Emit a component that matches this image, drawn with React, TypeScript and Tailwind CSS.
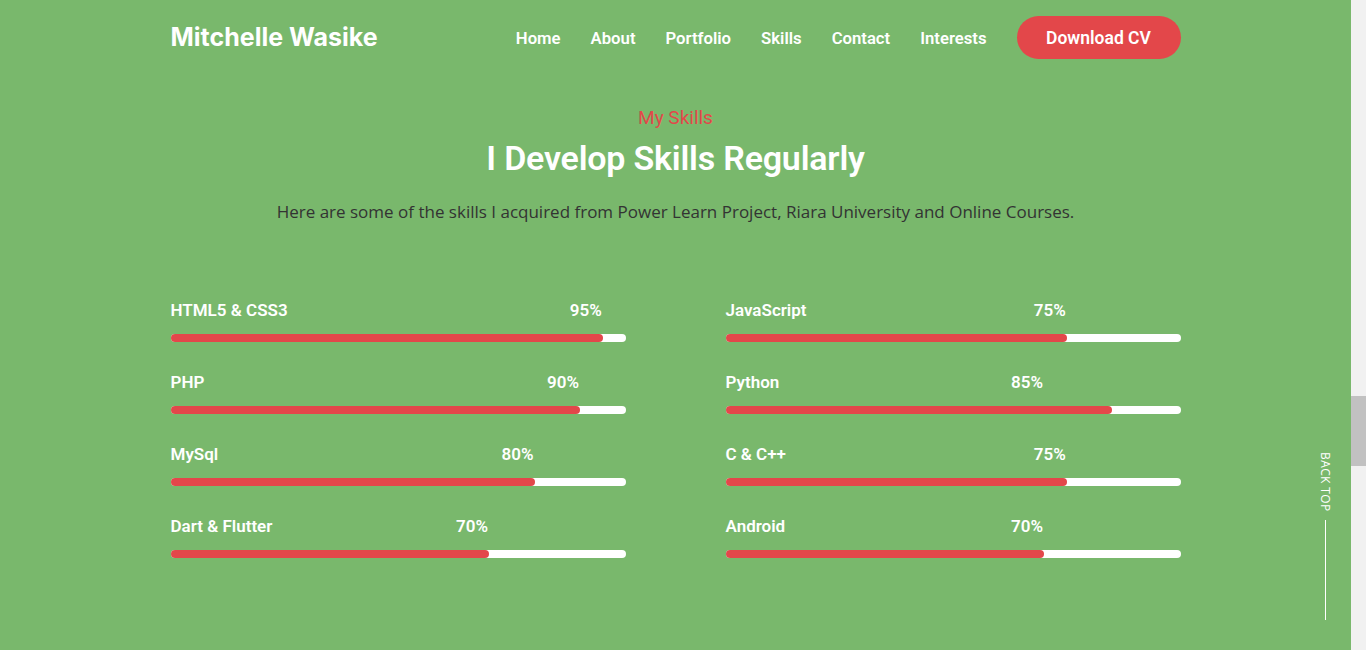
import React from "react";

const left = [
  { name: "HTML5 & CSS3", pct: 95, at: 95 },
  { name: "PHP", pct: 90, at: 90 },
  { name: "MySql", pct: 80, at: 80 },
  { name: "Dart & Flutter", pct: 70, at: 70 },
];
const right = [
  { name: "JavaScript", pct: 75, at: 75 },
  { name: "Python", pct: 85, at: 70 },
  { name: "C & C++", pct: 75, at: 75 },
  { name: "Android", pct: 70, at: 70 },
];

function Skill({ name, pct, at }: { name: string; pct: number; at: number }) {
  return (
    <div className="flex flex-col">
      <div className="relative h-[20px] text-[17px] leading-[20px] font-semibold text-white">
        <span>{name}</span>
        <span
          className="absolute top-0 -translate-x-full pr-[1px]"
          style={{ left: `${at}%` }}
        >
          {pct}%
        </span>
      </div>
      <div className="mt-[14px] h-[8px] w-full rounded-full bg-white">
        <div className="h-full rounded-full bg-[#e3474a]" style={{ width: `${pct}%` }} />
      </div>
    </div>
  );
}

export default function App() {
  const nav = ["Home", "About", "Portfolio", "Skills", "Contact", "Interests"];
  return (
    <div className="flex h-[650px] w-[1366px] overflow-hidden font-['Roboto',sans-serif]">
      <div className="relative flex-1 bg-[#79b86c]">
        <div className="mx-auto w-[1010px]">
          <header className="flex h-[43px] items-center justify-between mt-[16px]">
            <div className="font-['Inter',sans-serif] text-[25px] font-bold text-white">
              Mitchelle Wasike
            </div>
            <nav className="flex items-center">
              <ul className="flex items-center gap-[30px] text-[16.7px] font-semibold text-white pt-[2px]">
                {nav.map((n) => (
                  <li key={n}>{n}</li>
                ))}
              </ul>
              <div className="ml-[30px] flex h-[43px] w-[164px] items-center justify-center rounded-full bg-[#e3474a] text-[17.5px] font-semibold text-white pt-[1px]">
                Download CV
              </div>
            </nav>
          </header>

          <div className="flex flex-col items-center">
            <div className="mt-[48px] text-[19px] leading-[22px] text-[#e3474a]">My Skills</div>
            <h2 className="mt-[9px] text-[34px] leading-[40px] font-semibold text-white tracking-[-0.2px]">
              I Develop Skills Regularly
            </h2>
            <p className="mt-[22px] font-['Open_Sans',sans-serif] text-[17px] leading-[24px] text-[#333333]">
              Here are some of the skills I acquired from Power Learn Project, Riara University and Online Courses.
            </p>
          </div>

          <div className="mt-[76px] grid grid-cols-2 gap-x-[100px]">
            <div className="flex flex-col gap-[30px]">
              {left.map((s) => (
                <Skill key={s.name} {...s} />
              ))}
            </div>
            <div className="flex flex-col gap-[30px]">
              {right.map((s) => (
                <Skill key={s.name} {...s} />
              ))}
            </div>
          </div>
        </div>

        <div className="absolute right-[19px] top-[452px] flex flex-col items-center">
          <span className="font-['Open_Sans',sans-serif] text-[12px] leading-[14px] tracking-[0.4px] text-white [writing-mode:vertical-rl]">
            BACK TOP
          </span>
          <div className="mt-[8px] h-[100px] w-[1px] bg-white" />
        </div>
      </div>
      <div className="flex w-[15px] flex-col bg-[#f1f1f1]">
        <div className="mt-[396px] h-[70px] w-full bg-[#c1c1c1]" />
      </div>
    </div>
  );
}
